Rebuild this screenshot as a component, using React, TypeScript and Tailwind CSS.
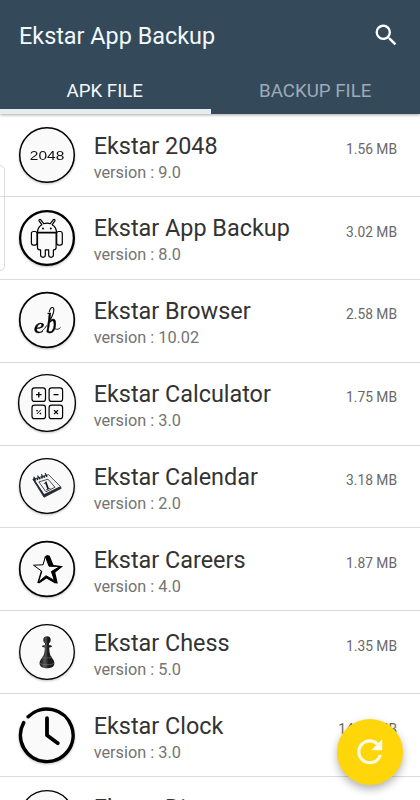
import React from 'react';
import { MdRefresh, MdSearch } from 'react-icons/md';

type AppItem = {
  name: string;
  version: string;
  size: string;
  icon: React.ReactNode;
};

const Ring: React.FC<{ r?: number; width?: number }> = ({ r = 27.3, width = 1.5 }) => (
  <circle cx="30" cy="30" r={r} fill="#fafafa" stroke="#000" strokeWidth={width} />
);

const Icon: React.FC<{ children: React.ReactNode }> = ({ children }) => (
  <svg
    viewBox="0 0 60 60"
    className="block h-[60px] w-[60px] shrink-0 drop-shadow-[0_1px_1px_rgba(0,0,0,0.25)]"
    fill="none"
    stroke="#000"
    strokeLinecap="round"
    strokeLinejoin="round"
  >
    {children}
  </svg>
);

const apps: AppItem[] = [
  {
    name: 'Ekstar 2048',
    version: '9.0',
    size: '1.56 MB',
    icon: (
      <Icon>
        <Ring />
        <text x="12.8" y="34.6" fontSize="12.8" textLength="34.5" lengthAdjust="spacingAndGlyphs" fill="#111" stroke="none" className="font-['Liberation_Sans',sans-serif]">
          2048
        </text>
      </Icon>
    ),
  },
  {
    name: 'Ekstar App Backup',
    version: '8.0',
    size: '3.02 MB',
    icon: (
      <Icon>
        <Ring r={26.9} width={2.3} />
        <g strokeWidth="1.2">
          <path d="M20.5 24.4c.1-3.6 1.7-6.2 4.3-7.7l-2.7-3.8c-.6-1 .9-2.1 1.7-1.1l2.9 3.9c2-.6 4.6-.6 6.6 0l2.9-3.9c.8-1 2.3.1 1.7 1.1l-2.7 3.8c2.6 1.5 4.2 4.1 4.3 7.7z" />
          <path d="M20.5 24.7v14.9c0 1.5.9 2.3 2.4 2.3h.7v5.2c0 2.9 4.7 2.9 4.7 0v-5.2h3.4v5.2c0 2.9 4.7 2.9 4.7 0v-5.2h.3c1.5 0 2.4-.8 2.4-2.3V24.7" />
          <rect x="14.4" y="23.5" width="5.6" height="13.6" rx="2" />
          <rect x="39.7" y="23.5" width="5.6" height="13.6" rx="2" />
          <path d="M20.5 24.7h18.6" strokeWidth="1.6" />
        </g>
        <circle cx="26" cy="20.6" r="1" fill="#000" stroke="none" />
        <circle cx="33.8" cy="20.6" r="1" fill="#000" stroke="none" />
      </Icon>
    ),
  },
  {
    name: 'Ekstar Browser',
    version: '10.02',
    size: '2.58 MB',
    icon: (
      <Icon>
        <Ring width={1.7} />
        <g fill="#000" strokeWidth=".45" className="font-['Liberation_Serif',serif] italic">
          <text fontSize="22" transform="translate(17 42.8) scale(1.05 1)">
            e
          </text>
          <text fontSize="22" transform="translate(29 43) scale(.95 1.35)">
            b
          </text>
        </g>
        {/* swashes around the monogram */}
        <path d="M31.8 31.5c4-4.5 6.7-13.3 3.9-14-1.6-.3-2.8 1.9-3.4 4" strokeWidth="1.1" />
        <path d="M25.5 40.5c1.5-1 3-2.7 3.9-4.7M38 38.8c1.7 1 3.9.7 5.3-1.1" strokeWidth=".9" />
      </Icon>
    ),
  },
  {
    name: 'Ekstar Calculator',
    version: '3.0',
    size: '1.75 MB',
    icon: (
      <Icon>
        <Ring r={28.4} width={1.4} />
        <g strokeWidth="1.2">
          <rect x="15" y="14.9" width="13.5" height="13.5" rx="2.5" />
          <rect x="32.1" y="14.9" width="13.5" height="13.5" rx="2.5" />
          <rect x="15" y="32.2" width="13.5" height="13.5" rx="2.5" />
          <rect x="32.1" y="32.2" width="13.5" height="13.5" rx="2.5" />
        </g>
        <g strokeWidth="1.3" strokeLinecap="butt">
          <path d="M19 21.7h5.6M21.8 18.9v5.6M36.5 21.7h5" />
          <path d="M37 37.1l4 4M41 37.1l-4 4" />
          <path d="M19.7 41l4.2-4.2" strokeWidth="1" />
          <path d="M19.3 37.6h1.5M22.7 40.5h1.5" />
        </g>
      </Icon>
    ),
  },
  {
    name: 'Ekstar Calendar',
    version: '2.0',
    size: '3.18 MB',
    icon: (
      <Icon>
        <Ring width={1.3} />
        <path d="M16 23.5L27 41.3 44.3 32.3 43 30.3 27 38.3 18 22z" fill="#222831" stroke="#222831" strokeWidth=".8" />
        <path d="M17 23L31.5 18.6 43.5 30.6 27.3 38.4z" fill="#f4f4f4" stroke="#222831" strokeWidth=".8" />
        <path d="M22.3 25.8L31 23.2 38 31.2 29.3 35.6z" stroke="#222831" strokeWidth=".8" />
        <path d="M17.3 24L31 19.5" stroke="#222831" strokeWidth="2.2" strokeDasharray="1.6 .8" strokeLinecap="butt" />
        <path d="M17 21.3l1 2M20.8 20l1 2M24.6 18.8l1 2M28.4 17.7l1 2" stroke="#222831" strokeWidth="1.3" />
        <text x="26.8" y="33.6" fontSize="12.5" fontWeight="bold" fill="#111" stroke="none" transform="rotate(-20 30 30)" className="font-['Liberation_Serif',serif]">
          1
        </text>
      </Icon>
    ),
  },
  {
    name: 'Ekstar Careers',
    version: '4.0',
    size: '1.87 MB',
    icon: (
      <Icon>
        <Ring width={1.7} />
        <g strokeLinejoin="miter">
          <path d="M28.5 17l1.8-1 2.4.8 3.8 9.1 9.5 1.3-7.7 6.3 2.5 11-3.1-.3-8.2-4.8-7 4.9-2.3-.2z" fill="#000" stroke="none" />
          <path d="M28.5 17.8L32 27.2 43 27.5 34.4 32.5 37.4 41.4 29 36.7 21.5 43 24.8 32.3 16.5 26.2 25.7 25.8z" fill="#fafafa" strokeWidth="1" />
        </g>
      </Icon>
    ),
  },
  {
    name: 'Ekstar Chess',
    version: '5.0',
    size: '1.35 MB',
    icon: (
      <Icon>
        <defs>
          <linearGradient id="pawn" x1="0" x2="1" y1="0" y2="0">
            <stop offset="0" stopColor="#111" />
            <stop offset=".35" stopColor="#555" />
            <stop offset=".6" stopColor="#1a1a1a" />
            <stop offset="1" stopColor="#1a1a1a" />
          </linearGradient>
        </defs>
        <Ring width={1.3} />
        <g fill="url(#pawn)" stroke="none">
          <circle cx="30" cy="18" r="3.7" />
          <path d="M28 21h4v2.3h-4z" />
          <ellipse cx="30" cy="24.3" rx="5" ry="1.3" />
          <path d="M27.8 25h4.4c0 4.5.6 7.5 2 10.2h-8.4c1.4-2.7 2-5.7 2-10.2z" />
          <path d="M25.5 34.5h9c.1 1.7 2.9 3.4 2.9 6.5 0 1 0 1.5-.4 2-1.1 4.3-12.9 4.3-14 0-.4-.5-.4-1-.4-2 0-3.1 2.8-4.8 2.9-6.5z" />
        </g>
        <path d="M22.9 41.3c2.5 2 11.7 2 14.2 0M25.5 35.3c2.5 1 6.5 1 9 0" stroke="#888" strokeWidth=".5" />
      </Icon>
    ),
  },
  {
    name: 'Ekstar Clock',
    version: '3.0',
    size: '14.12 MB',
    icon: (
      <Icon>
        <circle cx="30" cy="30" r="26.3" fill="#fafafa" stroke="none" />
        <path d="M11.2 11.7A26.3 26.3 0 1 1 6.7 17.7" strokeWidth="3.5" />
        <path d="M30 13.2V30.3L40.8 38.2" strokeWidth="3.8" />
      </Icon>
    ),
  },
  {
    name: 'Ekstar Diary',
    version: '2.0',
    size: '2.10 MB',
    icon: (
      <Icon>
        <Ring width={1.3} />
      </Icon>
    ),
  },
];

const Header: React.FC = () => (
  <header className="relative z-10 h-[114px] shrink-0 bg-[#34495a] shadow-[0_1px_3px_rgba(0,0,0,0.35)]">
    <div className="flex h-[73px] items-center justify-between pl-[19px] pr-[19.5px]">
      <h1 className="text-[23.4px] leading-none text-[#f3f8fc]">Ekstar App Backup</h1>
      <MdSearch className="mt-[-3px] h-[28.5px] w-[28.5px] text-white" />
    </div>
    <nav className="flex h-[41px] text-[18.7px] leading-[37px]">
      <button className="flex w-[210.5px] justify-center border-b-[5px] border-[#e6edf0] pr-[1px] text-[#f3f8fc]">APK FILE</button>
      <button className="flex flex-1 justify-center text-[#9eabb8]">BACKUP FILE</button>
    </nav>
  </header>
);

const App: React.FC = () => {
  return (
    <div className="relative flex h-[800px] w-[420px] flex-col overflow-hidden bg-white font-[Roboto,sans-serif]">
      <Header />

      <ul className="flex flex-col">
        {apps.map((app) => (
          <li key={app.name} className="group flex h-[82.88px] shrink-0 border-b border-[#dcdcdc] pl-[16.7px] pr-[23px] pt-[10.7px]">
            {app.icon}
            <div className="ml-[17px] flex-1 pt-[6.9px] group-last:pt-[6px]">
              <h2 className="text-[23.4px] leading-[28px] text-[#333]">{app.name}</h2>
              <p className="mt-[4px] text-[16.3px] leading-[18px] text-[#747474]">version : {app.version}</p>
            </div>
            <span className="mt-[16px] text-[13.8px] leading-[16px] text-[#686868]">{app.size}</span>
          </li>
        ))}
      </ul>

      {/* Edge panel handle */}
      <div className="absolute left-[-8px] top-[165px] z-10 h-[106px] w-[13px] rounded-[5px] border border-[#dcdcdc]" />

      <button className="absolute left-[337px] top-[718.5px] z-20 flex h-[66px] w-[66px] items-center justify-center rounded-full bg-[#ffd60a] text-[#fffbe8] shadow-[0_4px_8px_rgba(0,0,0,0.3)]">
        <MdRefresh className="h-[37.5px] w-[37.5px]" />
      </button>
    </div>
  );
};

export default App;
